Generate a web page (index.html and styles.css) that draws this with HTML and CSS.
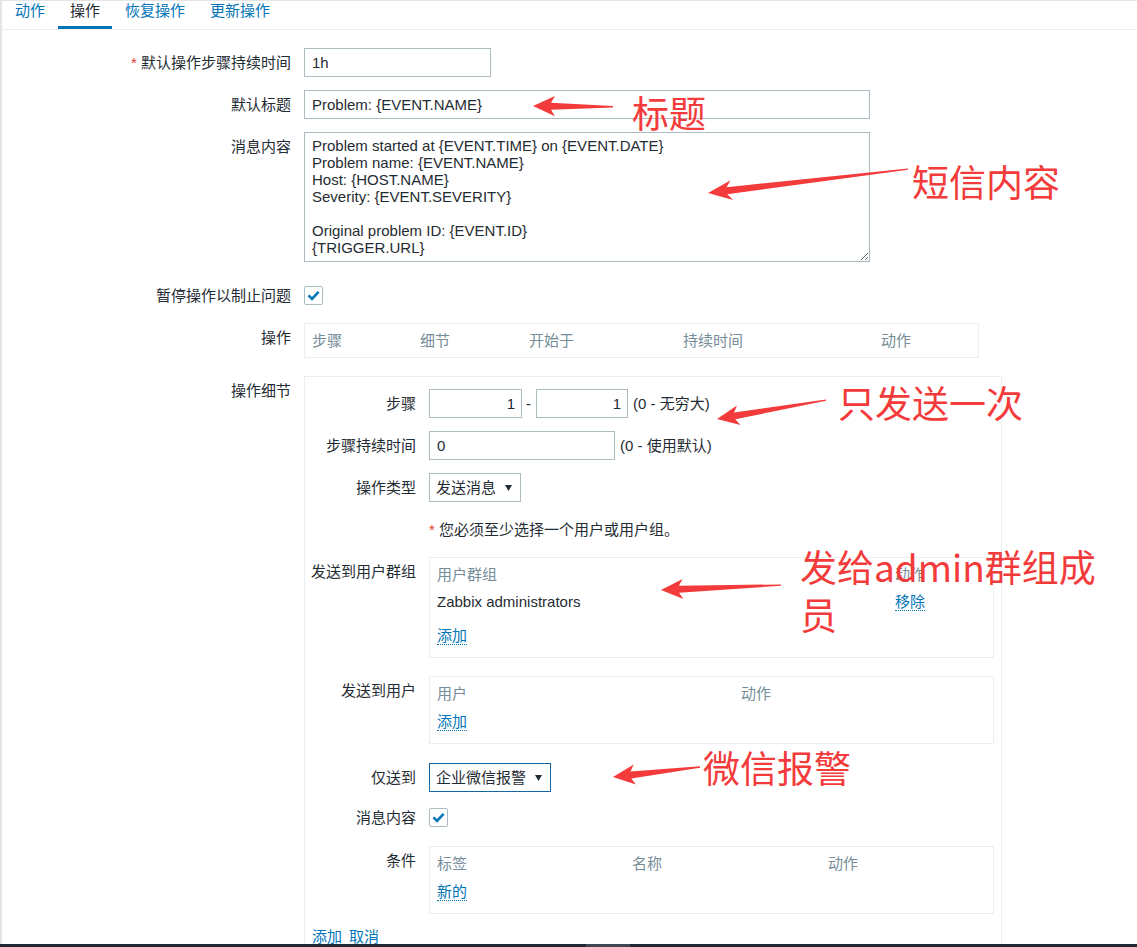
FILE: index.html
```html
<!DOCTYPE html>
<html lang="zh-CN">
<head>
<meta charset="utf-8">
<title>操作</title>
<link rel="stylesheet" href="styles.css">
</head>
<body>
<div class="page">
  <nav class="tabs">
    <span class="tab">动作</span>
    <span class="tab active">操作</span>
    <span class="tab">恢复操作</span>
    <span class="tab">更新操作</span>
  </nav>
  <main class="form">
    <div class="row">
      <div class="lbl"><span class="req">*</span> 默认操作步骤持续时间</div>
      <div class="ctl"><input class="inp w187" type="text" value="1h"></div>
    </div>
    <div class="row">
      <div class="lbl">默认标题</div>
      <div class="ctl"><input class="inp w566" type="text" value="Problem: {EVENT.NAME}"></div>
    </div>
    <div class="row mb19">
      <div class="lbl">消息内容</div>
      <div class="ctl"><textarea class="ta">Problem started at {EVENT.TIME} on {EVENT.DATE}
Problem name: {EVENT.NAME}
Host: {HOST.NAME}
Severity: {EVENT.SEVERITY}

Original problem ID: {EVENT.ID}
{TRIGGER.URL}</textarea></div>
    </div>
    <div class="row">
      <div class="lbl">暂停操作以制止问题</div>
      <div class="ctl"><span class="cb"><svg viewBox="0 0 17 17" width="17" height="17"><path d="M3.5 8.3 L7 11.8 L13.6 4.8" fill="none" stroke="#0275b8" stroke-width="2.6"/></svg></span></div>
    </div>
    <div class="row mb18">
      <div class="lbl">操作</div>
      <div class="ctl">
        <div class="box ops"><span>步骤</span><span>细节</span><span>开始于</span><span>持续时间</span><span>动作</span></div>
      </div>
    </div>
    <div class="row">
      <div class="lbl">操作细节</div>
      <div class="ctl">
        <div class="details">
          <div class="irow">
            <div class="lbl">步骤</div>
            <div class="ictl">
              <input class="inp num w93" type="text" value="1"><span class="dash">-</span><input class="inp num w92" type="text" value="1"><span class="hint">(0 - 无穷大)</span>
            </div>
          </div>
          <div class="irow">
            <div class="lbl">步骤持续时间</div>
            <div class="ictl"><input class="inp w186" type="text" value="0"><span class="hint">(0 - 使用默认)</span></div>
          </div>
          <div class="irow">
            <div class="lbl">操作类型</div>
            <div class="ictl"><span class="sel w92">发送消息<svg class="tri" viewBox="0 0 7 6" width="7" height="6"><path d="M0 0 H7 L3.5 6 Z" fill="#1f2c33"/></svg></span></div>
          </div>
          <div class="irow">
            <div class="lbl"></div>
            <div class="ictl note-row"><span class="req">*</span>&nbsp;您必须至少选择一个用户或用户组。</div>
          </div>
          <div class="irow mb18">
            <div class="lbl">发送到用户群组</div>
            <div class="bctl">
              <div class="sub">
                <div class="sg g-grp hd"><span>用户群组</span><span>动作</span></div>
                <div class="sg g-grp r-item"><span>Zabbix administrators</span><span><span class="lnk">移除</span></span></div>
                <div class="r-add2"><span class="lnk">添加</span></div>
              </div>
            </div>
          </div>
          <div class="irow mb19">
            <div class="lbl">发送到用户</div>
            <div class="bctl">
              <div class="sub">
                <div class="sg g-usr hd"><span>用户</span><span>动作</span></div>
                <div class="r-add"><span class="lnk">添加</span></div>
              </div>
            </div>
          </div>
          <div class="irow mb11">
            <div class="lbl">仅送到</div>
            <div class="ictl"><span class="sel w122 focus">企业微信报警<svg class="tri" viewBox="0 0 7 6" width="7" height="6"><path d="M0 0 H7 L3.5 6 Z" fill="#1f2c33"/></svg></span></div>
          </div>
          <div class="irow mb14">
            <div class="lbl">消息内容</div>
            <div class="bctl cbrow"><span class="cb"><svg viewBox="0 0 17 17" width="17" height="17"><path d="M3.5 8.3 L7 11.8 L13.6 4.8" fill="none" stroke="#0275b8" stroke-width="2.6"/></svg></span></div>
          </div>
          <div class="irow mb14">
            <div class="lbl">条件</div>
            <div class="bctl">
              <div class="sub">
                <div class="sg g-cond hd"><span>标签</span><span>名称</span><span>动作</span></div>
                <div class="r-add"><span class="lnk">新的</span></div>
              </div>
            </div>
          </div>
          <div class="btns"><span class="btn">添加</span><span class="btn">取消</span></div>
        </div>
      </div>
    </div>
  </main>
</div>
<div class="taskbar"><span class="tb-seg"></span></div>

<div class="note n1">标题</div>
<div class="note n2">短信内容</div>
<div class="note n3">只发送一次</div>
<div class="note n4">发给admin群组成<br>员</div>
<div class="note n5">微信报警</div>
<svg class="arrows" width="1137" height="947" viewBox="0 0 1137 947">
  <polygon points="533,106 555,96 551,102.7 613,106 613,107.5 551,109.7 555,116.3"/>
  <polygon points="708,193 730.6,180.2 726.5,187.2 908,168.4 908,169.8 727.3,194.2 733,200"/>
  <polygon points="717,419 737,405.4 734.1,412.5 826,399.4 826,400.8 735.3,419.3 740.4,425.1"/>
  <polygon points="661,590 682.6,579.1 678.9,585.7 781,584.4 781,585.8 679.1,592.7 683.4,599.1"/>
  <polygon points="613,777 633.7,764.6 630.5,771.4 700,766.3 700,767.7 631.3,778.4 635.9,784.4"/>
</svg>
</body>
</html>
```

FILE: styles.css
```css
* { box-sizing: border-box; }
html, body { margin: 0; height: 947px; overflow: hidden; }
body {
  position: relative;
  display: flex;
  flex-direction: column;
  font: 15px/17px "Liberation Sans", "Noto Sans CJK SC", sans-serif;
  color: #1f2c33;
  background: #fff;
}
.page {
  flex: 1;
  min-height: 0;
  overflow: hidden;
  border-left: 2px solid #e1e6ea;
  border-top: 1px solid #e2e4e6;
  display: flex;
  flex-direction: column;
}
.taskbar {
  height: 3px;
  background: #1d2830;
  display: flex;
}
.tb-seg { margin-left: 586px; width: 44px; background: #3d4852; }

/* tabs */
.tabs {
  height: 29px;
  border-bottom: 1px solid #ebeef0;
  display: flex;
  gap: 1px;
  padding-left: 1px;
  flex: none;
}
.tab {
  height: 28px;
  padding: 1px 12px 0;
  color: #0275b8;
  white-space: nowrap;
}
.tab.active {
  color: #1f2c33;
  border-bottom: 3px solid #0275b8;
}

/* form */
.form { padding-top: 18px; flex: 1; min-height: 0; }
.row {
  display: grid;
  grid-template-columns: 289px 1fr;
  column-gap: 13px;
  margin-bottom: 13px;
}
.lbl { text-align: right; padding-top: 6px; white-space: nowrap; }
.req { color: #e33734; }
.ctl { min-height: 29px; }

.inp {
  display: block;
  height: 29px;
  border: 1px solid #acbbc2;
  padding: 0 7px;
  font: inherit;
  color: #1f2c33;
  background: #fff;
  outline: none;
  margin: 0;
}
.num { text-align: right; padding-right: 6px; }
.w187 { width: 187px; }
.w566 { width: 566px; }
.w93 { width: 93px; }
.w92 { width: 92px; }
.w186 { width: 186px; }

.ta {
  display: block;
  width: 566px;
  height: 130px;
  margin: 0;
  border: 1px solid #acbbc2;
  padding: 4px 7px;
  font: inherit;
  color: #1f2c33;
}

.cb {
  display: flex;
  align-items: center;
  justify-content: center;
  width: 19px;
  height: 19px;
  border: 1px solid #acbbc2;
  border-radius: 2px;
  margin-top: 5px;
  background: #fff;
}
.cbrow { min-height: 29px; }

.box { border: 1px solid #ebeef0; padding: 8px 7px; }
.ops {
  width: 675px;
  display: grid;
  grid-template-columns: 108px 109px 154px 198px 1fr;
  color: #768d99;
}

/* details */
.details {
  width: 698px;
  border: 1px solid #ebeef0;
  padding: 12px 0 40px;
}
.irow {
  display: grid;
  grid-template-columns: 111px 1fr;
  column-gap: 13px;
  margin-bottom: 13px;
}
.ictl {
  display: flex;
  align-items: center;
  min-height: 29px;
  white-space: nowrap;
}
.dash { margin: 0 5px 0 4px; }
.hint { margin-left: 5px; }
.note-row { align-items: flex-start; padding-top: 6px; }

.sel {
  display: flex;
  align-items: center;
  justify-content: space-between;
  height: 29px;
  border: 1px solid #acbbc2;
  padding: 0 8px 0 6px;
  background: #fff;
  white-space: nowrap;
}
.sel.w92 { width: 92px; }
.sel.w122 { width: 122px; }
.sel.focus { border-color: #1566a3; }
.tri { flex: none; }

.sub {
  width: 565px;
  border: 1px solid #ebeef0;
  padding: 8px 7px 13px;
}
.sg { display: grid; }
.hd { color: #768d99; }
.g-grp { grid-template-columns: 458px 1fr; }
.g-usr { grid-template-columns: 304px 1fr; }
.g-cond { grid-template-columns: 195px 196px 1fr; }
.r-item { margin-top: 10px; }
.r-add2 { margin-top: 17px; }
.r-add { margin-top: 11px; }

.lnk {
  color: #0275b8;
  border-bottom: 1px dotted #0275b8;
}

.btns {
  display: flex;
  gap: 7px;
  padding-left: 7px;
}
.btn { color: #0275b8; }

/* spacing modifiers (after base rules so they win) */
.row.mb18, .irow.mb18 { margin-bottom: 18px; }
.row.mb19, .irow.mb19 { margin-bottom: 19px; }
.irow.mb11 { margin-bottom: 11px; }
.irow.mb14 { margin-bottom: 14px; }

/* annotations */
.note {
  position: absolute;
  font: 37px/1 "Noto Sans CJK SC", sans-serif;
  color: #f33b3b;
  white-space: nowrap;
}
.n1 { left: 632px; top: 94px; }
.n2 { left: 912px; top: 163px; }
.n3 { left: 838px; top: 384px; }
.n4 { left: 800px; top: 542px; line-height: 48px; }
.n5 { left: 703px; top: 749px; }
.arrows {
  position: absolute;
  left: 0;
  top: 0;
  fill: #f33b3b;
  pointer-events: none;
}
```
